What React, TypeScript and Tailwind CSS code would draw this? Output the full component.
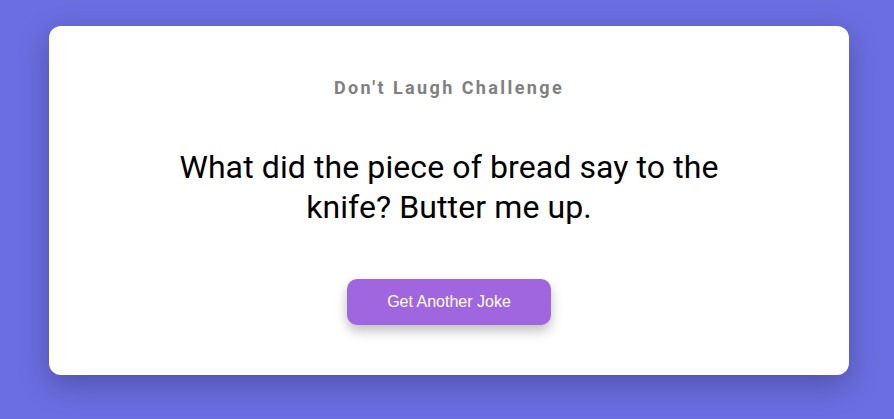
export default function App() {
  return (
    <div className="min-h-[419px] w-full bg-[#6a6ee1] pt-[26px] pl-[4px] flex justify-center">
      <div className="w-[800px] h-[349px] bg-white rounded-xl shadow-[0_10px_30px_rgba(0,0,0,0.25)] flex flex-col items-center pt-[48px]">
        <h1 className="font-['Roboto',sans-serif] font-bold text-[18px] leading-[28px] tracking-[2.4px] text-[#808080]">
          Don't Laugh Challenge
        </h1>
        <p className="mt-[45px] max-w-[600px] text-center font-['Roboto',sans-serif] font-normal text-[32px] leading-[40px] tracking-[0.1px] text-black">
          What did the piece of bread say to the knife? Butter me up.
        </p>
        <button className="mt-[52px] w-[204px] h-[46px] rounded-[10px] bg-[#a066e0] text-white font-['Liberation_Sans',Arial,sans-serif] text-[16px] shadow-[0_6px_12px_rgba(0,0,0,0.25)]">
          Get Another Joke
        </button>
      </div>
    </div>
  );
}
